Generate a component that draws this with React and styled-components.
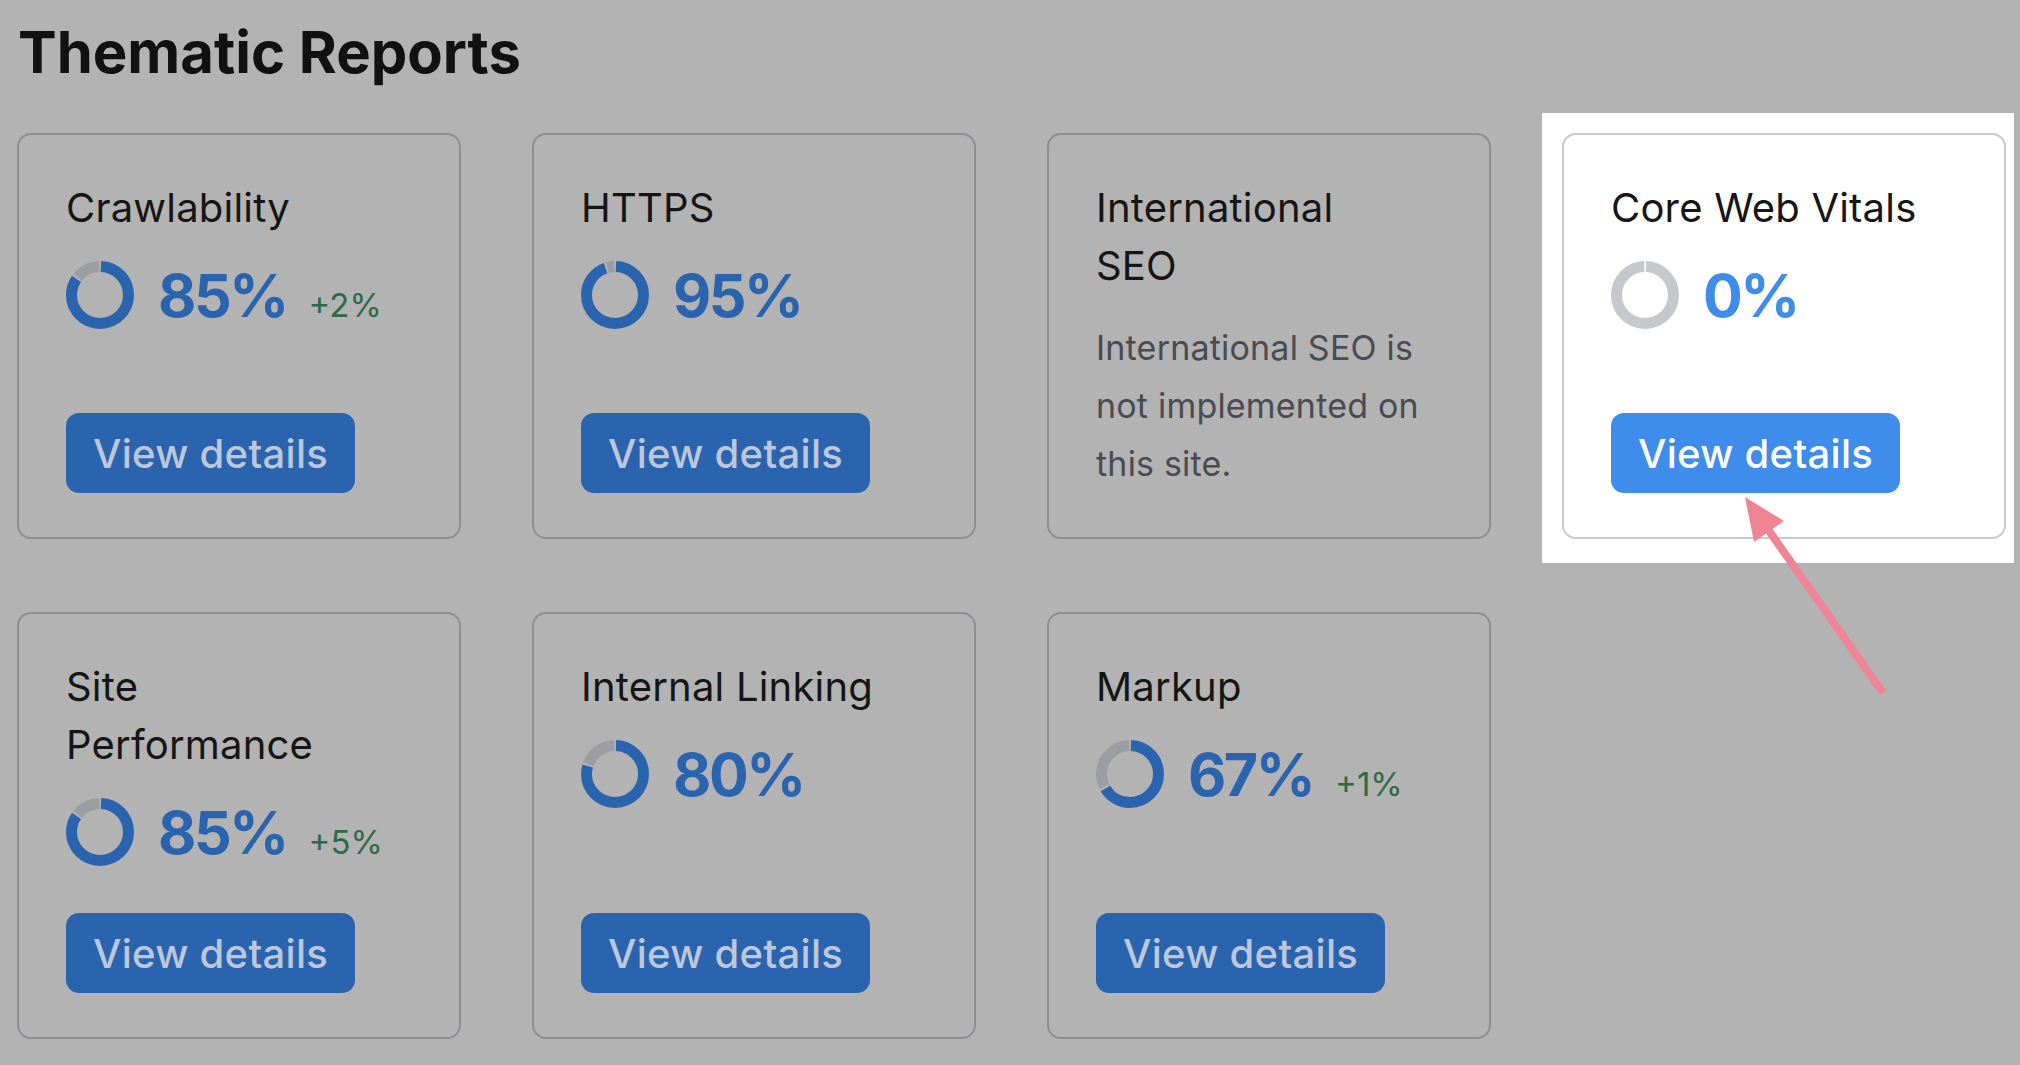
import React from "react";
import styled, { createGlobalStyle } from "styled-components";

const GlobalStyle = createGlobalStyle`
  body {
    margin: 0;
    background: #b3b3b3;
    font-family: Inter, "Noto Sans", "Liberation Sans", sans-serif;
  }
`;

const dim = {
  bg: "transparent",
  border: "#8e8f94",
  title: "#151515",
  blue: "#2b64ae",
  btnText: "#bdc7db",
  track: "#9c9da2",
  green: "#2e6a47",
  desc: "#4a4b52",
};

const lit = {
  bg: "#ffffff",
  border: "#c9cace",
  title: "#161616",
  blue: "#3e8dea",
  btnText: "#ffffff",
  track: "#c6c8ce",
  green: "#2e8a57",
  desc: "#5a5b62",
};

const Page = styled.div`
  position: relative;
  width: 2020px;
  min-height: 1065px;
  padding: 17px 0 0 17px;
  box-sizing: border-box;
  overflow: hidden;
`;

const Heading = styled.h1`
  margin: 0 0 46px 1px;
  font-size: 58px;
  line-height: 70px;
  font-weight: 700;
  letter-spacing: 0;
  color: #111;
`;

const Grid = styled.div`
  display: grid;
  grid-template-columns: repeat(4, 444px);
  column-gap: 71px;
  row-gap: 73px;
`;

const Spotlight = styled.div`
  display: flex;
  margin: -20px -8px -24px -20px;
  padding: 20px 8px 24px 20px;
  background: #fff;
`;

const Card = styled.div`
  flex: 1;
  display: flex;
  flex-direction: column;
  align-items: flex-start;
  padding: 44px 47px 44px;
  border: 2px solid ${(p) => p.$c.border};
  border-radius: 14px;
  background: ${(p) => p.$c.bg};
`;

const Title = styled.div`
  max-width: 318px;
  font-size: 40px;
  line-height: 58px;
  font-weight: 400;
  letter-spacing: 0.2px;
  color: ${(p) => p.$c.title};
`;

const Metric = styled.div`
  display: flex;
  align-items: center;
  gap: 24px;
  margin-top: 24px;
  margin-bottom: 47px;
`;

const Values = styled.div`
  display: flex;
  align-items: baseline;
  gap: 22px;
`;

const Value = styled.span`
  font-size: 59px;
  line-height: 1;
  font-weight: 700;
  letter-spacing: -2.5px;
  color: ${(p) => p.$c.blue};
`;

const Delta = styled.span`
  font-size: 33px;
  line-height: 1;
  color: ${(p) => p.$c.green};
`;

const Desc = styled.p`
  margin: 24px 0 0;
  font-size: 34px;
  line-height: 58px;
  letter-spacing: 0.2px;
  color: ${(p) => p.$c.desc};
`;

const Button = styled.button`
  margin-top: auto;
  height: 80px;
  padding: 0 27px;
  border: none;
  border-radius: 13px;
  background: ${(p) => p.$c.blue};
  color: ${(p) => p.$c.btnText};
  font-family: inherit;
  font-size: 40px;
  font-weight: 500;
  letter-spacing: 0.3px;
  cursor: pointer;
`;

const Arrow = styled.svg`
  position: absolute;
  left: 1735px;
  top: 490px;
  overflow: visible;
`;

const Donut = ({ value, c }) => {
  const r = 28.5;
  const C = 2 * Math.PI * r;
  const gap = 2;
  const v = value / 100;
  const on = Math.max(v * C - gap, 0);
  const off = Math.max((1 - v) * C - gap, 0);
  return (
    <svg width="68" height="68" viewBox="0 0 68 68">
      <g transform="rotate(-90 34 34)" fill="none" strokeWidth="11">
        {off > 0 && (
          <circle
            cx="34"
            cy="34"
            r={r}
            stroke={c.track}
            strokeDasharray={`${off} ${C}`}
            strokeDashoffset={-(v * C + gap / 2)}
          />
        )}
        {on > 0 && (
          <circle
            cx="34"
            cy="34"
            r={r}
            stroke={c.blue}
            strokeDasharray={`${on} ${C}`}
            strokeDashoffset={-gap / 2}
          />
        )}
      </g>
    </svg>
  );
};

const reports = [
  { title: "Crawlability", value: 85, delta: "+2%" },
  { title: "HTTPS", value: 95 },
  {
    title: "International SEO",
    text: "International SEO is not implemented on this site.",
  },
  { title: "Core Web Vitals", value: 0, lit: true },
  { title: "Site Performance", value: 85, delta: "+5%" },
  { title: "Internal Linking", value: 80 },
  { title: "Markup", value: 67, delta: "+1%" },
];

const ReportCard = ({ r }) => {
  const c = r.lit ? lit : dim;
  return (
    <Card $c={c}>
      <Title $c={c}>{r.title}</Title>
      {r.text ? (
        <Desc $c={c}>{r.text}</Desc>
      ) : (
        <>
          <Metric>
            <Donut value={r.value} c={c} />
            <Values>
              <Value $c={c}>{r.value}%</Value>
              {r.delta && <Delta $c={c}>{r.delta}</Delta>}
            </Values>
          </Metric>
          <Button $c={c}>View details</Button>
        </>
      )}
    </Card>
  );
};

export default function App() {
  return (
    <Page>
      <GlobalStyle />
      <Heading>Thematic Reports</Heading>
      <Grid>
        {reports.map((r) =>
          r.lit ? (
            <Spotlight key={r.title}>
              <ReportCard r={r} />
            </Spotlight>
          ) : (
            <ReportCard key={r.title} r={r} />
          )
        )}
      </Grid>
      {/* annotation arrow pointing at the button */}
      <Arrow width="160" height="215" viewBox="0 0 160 215">
        <line x1="148" y1="203" x2="32" y2="38" stroke="#ef8494" strokeWidth="8" />
        <polygon points="10,7 49,31 19,52" fill="#ef8494" />
      </Arrow>
    </Page>
  );
}
